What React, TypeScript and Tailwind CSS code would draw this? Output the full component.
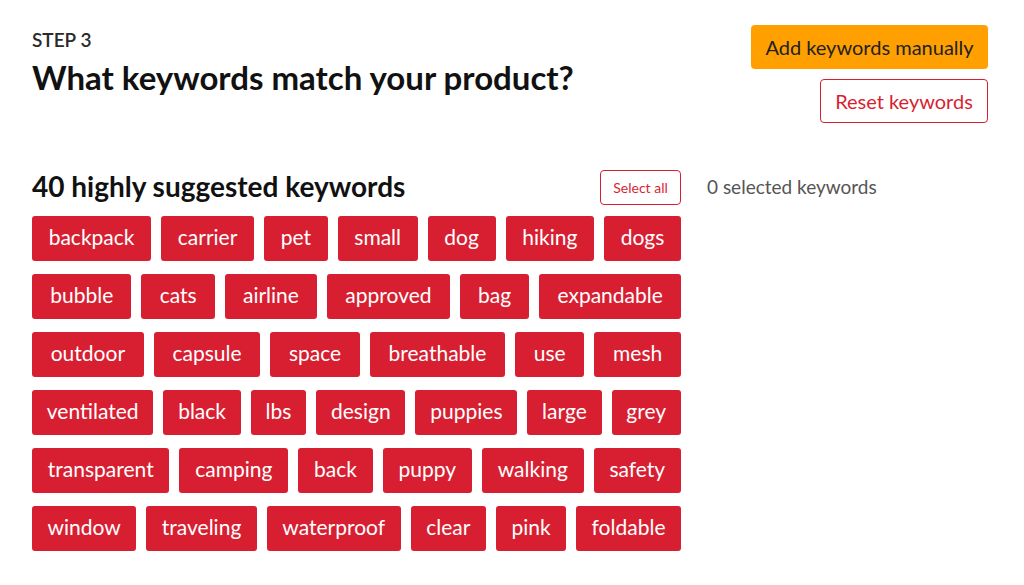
const rows: string[][] = [
  ['backpack', 'carrier', 'pet', 'small', 'dog', 'hiking', 'dogs'],
  ['bubble', 'cats', 'airline', 'approved', 'bag', 'expandable'],
  ['outdoor', 'capsule', 'space', 'breathable', 'use', 'mesh'],
  ['ventilated', 'black', 'lbs', 'design', 'puppies', 'large', 'grey'],
  ['transparent', 'camping', 'back', 'puppy', 'walking', 'safety'],
  ['window', 'traveling', 'waterproof', 'clear', 'pink', 'foldable'],
]

export default function App() {
  return (
    <div className="min-h-[585px] bg-white px-8 pt-[25px] font-['Lato',sans-serif] text-[#111]">
      <div className="flex items-start justify-between pr-[4px]">
        <div className="pt-[3px]">
          <div className="text-[19px] font-semibold leading-6 text-[#2a2a2a]">STEP 3</div>
          <h1 className="mt-[5px] text-[33px] font-bold leading-10 text-[#111]">What keywords match your product?</h1>
        </div>
        <div className="flex flex-col items-end gap-[10px]">
          <button
            type="button"
            className="h-[44px] w-[237px] rounded-[4px] bg-[#FFA000] text-[20px] text-[#222]"
          >
            Add keywords manually
          </button>
          <button
            type="button"
            className="h-[44px] w-[168px] rounded-[4px] border border-[#D81F32] bg-white text-[20px] text-[#D81F32]"
          >
            Reset keywords
          </button>
        </div>
      </div>

      <div className="mt-[47px] flex items-start">
        <div className="w-[649px]">
          <div className="flex h-[35px] items-center justify-between">
            <h2 className="mb-[3px] text-[28px] font-bold text-[#111]">40 highly suggested keywords</h2>
            <button
              type="button"
              className="h-[35px] w-[81px] rounded-[4px] border border-[#D81F32] bg-white text-[14px] text-[#D81F32]"
            >
              Select all
            </button>
          </div>
          <div className="mt-[11px] flex flex-col gap-[13px]">
            {rows.map((row, i) => (
              <div key={i} className="flex gap-[10px]">
                {row.map((word) => (
                  <button
                    key={word}
                    type="button"
                    className="h-[45px] flex-auto rounded-[3px] bg-[#D81F32] px-[14px] pb-[3px] text-[21px] text-white"
                  >
                    {word}
                  </button>
                ))}
              </div>
            ))}
          </div>
        </div>
        <div className="ml-[26px] flex h-[35px] items-center text-[19px] text-[#555]">0 selected keywords</div>
      </div>
    </div>
  )
}
